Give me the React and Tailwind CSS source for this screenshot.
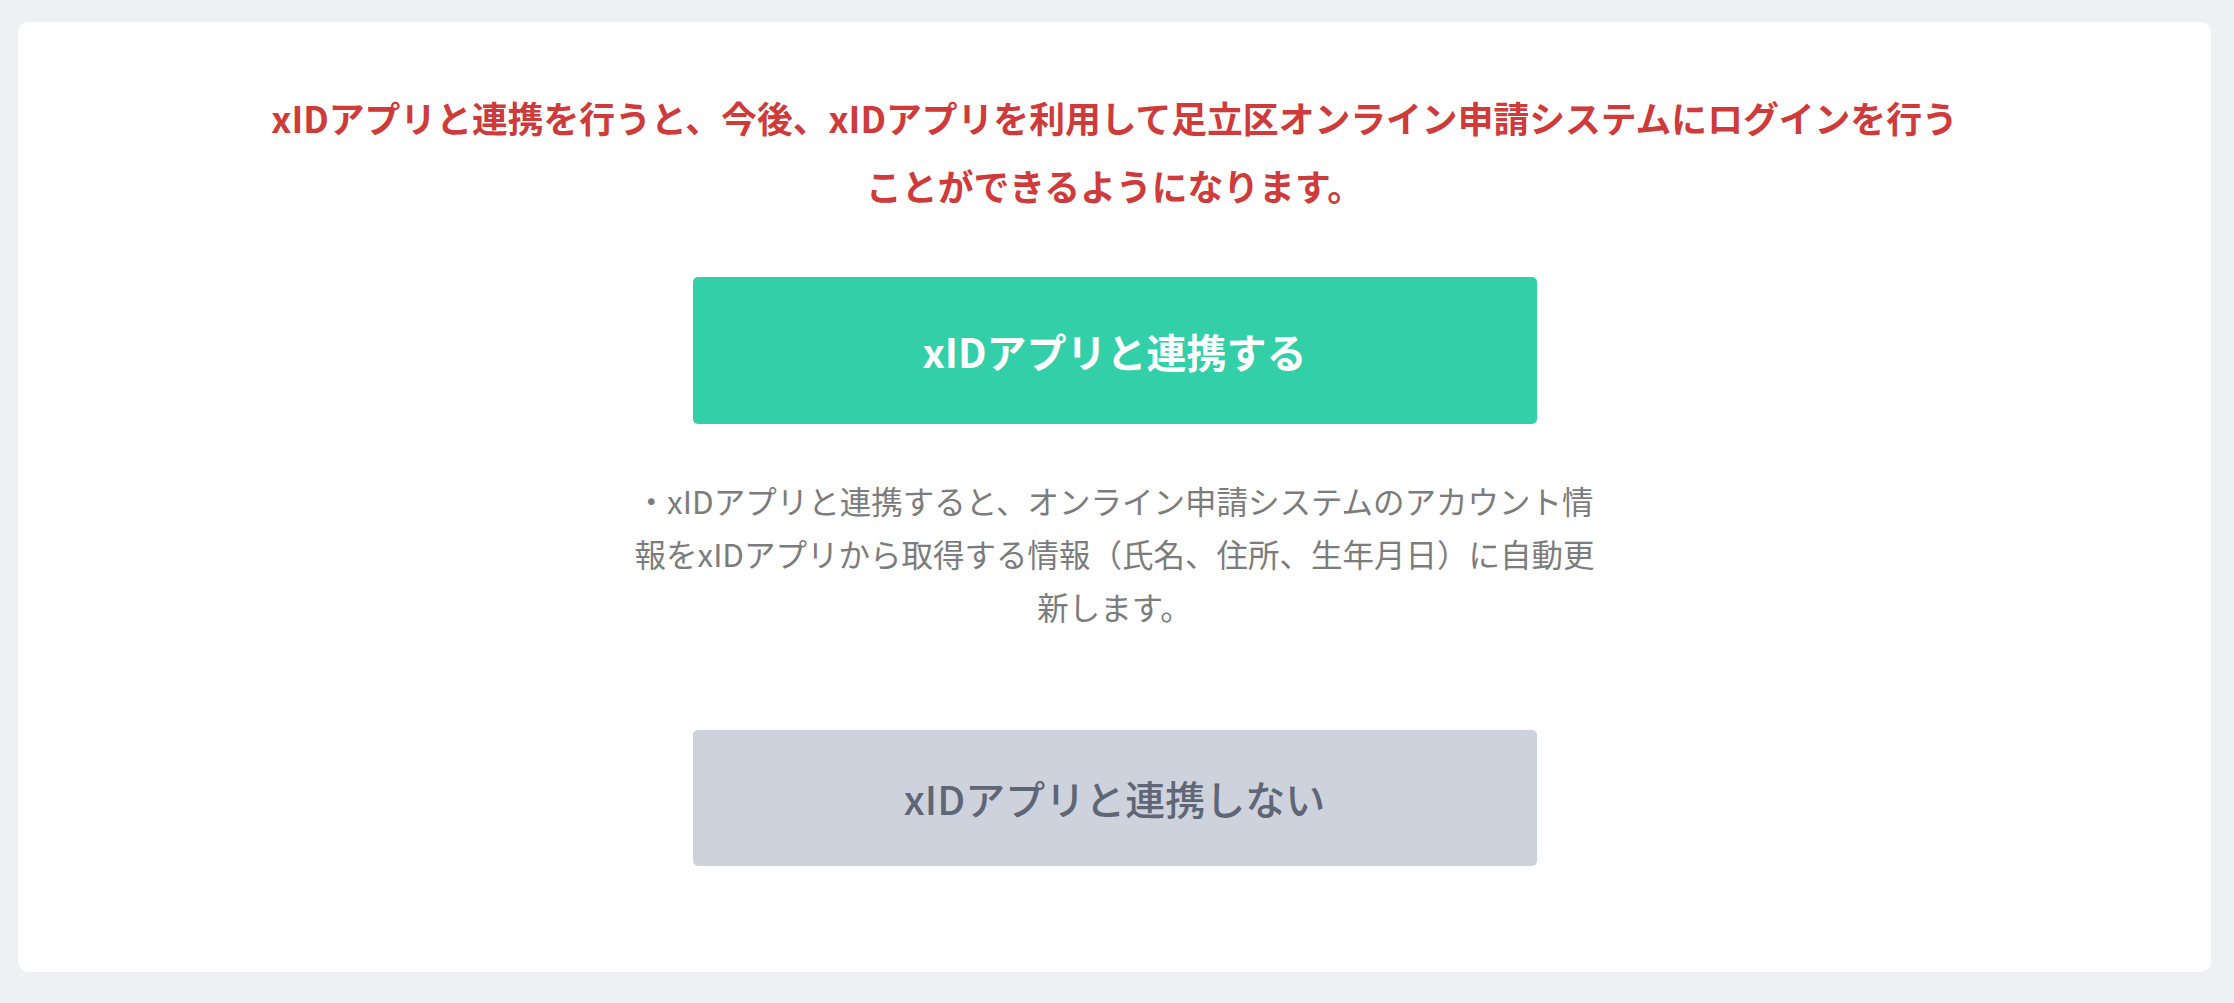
export default function App() {
  const font = { fontFamily: '"Noto Sans CJK JP", "Noto Sans", sans-serif' };
  return (
    <div className="min-h-screen w-full bg-[#eff0f4] pt-[22px] pb-[30px] px-[18px] pr-[23px]" style={font}>
      <div className="bg-white rounded-[10px] pt-[61px] pb-[106px] flex flex-col items-center">
        <p className="text-[#cf3a3a] font-bold text-[35.8px] leading-[68px] text-center">
          xIDアプリと連携を行うと、今後、xIDアプリを利用して足立区オンライン申請システムにログインを行う
          <br />
          ことができるようになります。
        </p>
        <button className="mt-[58px] w-[844px] h-[147px] rounded-[5px] bg-[#33cfa9] text-white font-bold text-[40px]">
          xIDアプリと連携する
        </button>
        <p className="mt-[50px] text-[#7c7c7c] text-[31.5px] leading-[53px] text-center">
          ・xIDアプリと連携すると、オンライン申請システムのアカウント情
          <br />
          報をxIDアプリから取得する情報（氏名、住所、生年月日）に自動更
          <br />
          新します。
        </p>
        <button className="mt-[97px] w-[844px] h-[136px] rounded-[5px] bg-[#ced2dc] text-[#5f6675] font-medium text-[40px]">
          xIDアプリと連携しない
        </button>
      </div>
    </div>
  );
}
